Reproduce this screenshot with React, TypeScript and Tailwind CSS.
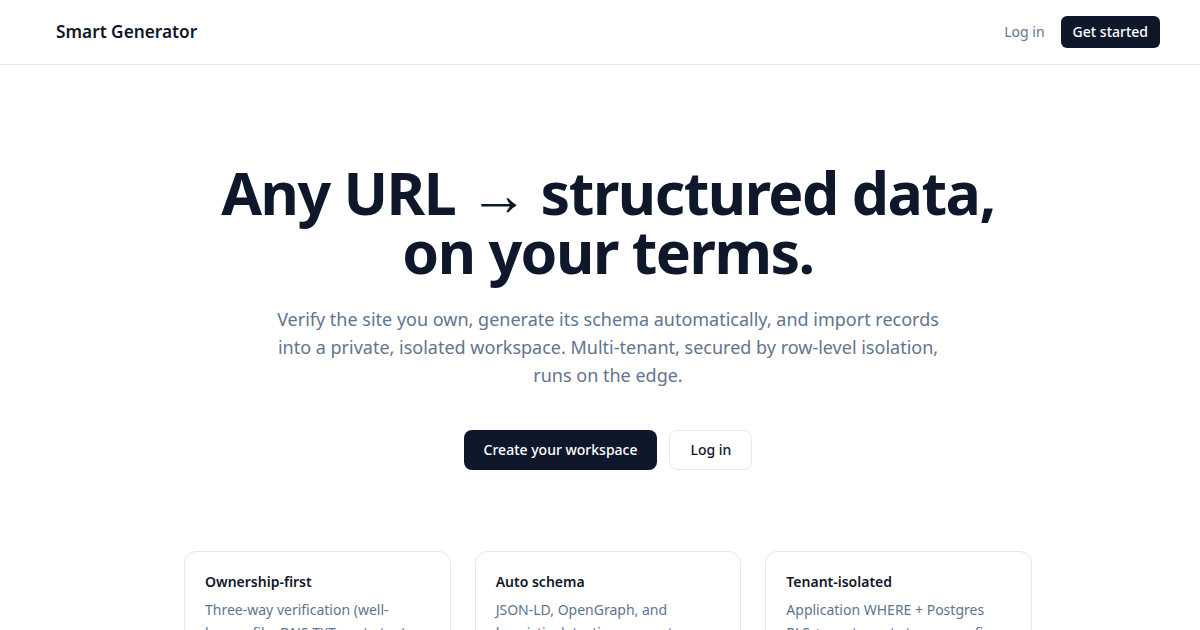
export default function App() {
  const features = [
    {
      title: "Ownership-first",
      body: "Three-way verification (well-known file, DNS TXT, meta tag) before a single page is crawled.",
    },
    {
      title: "Auto schema",
      body: "JSON-LD, OpenGraph, and heuristic detection generate your schema without manual mapping.",
    },
    {
      title: "Tenant-isolated",
      body: "Application WHERE + Postgres RLS + per-tenant storage prefix keep every workspace separate.",
    },
  ];

  return (
    <div className="w-full overflow-hidden bg-white">
      <div
        className="min-h-screen w-[1216px] bg-white text-slate-900"
        style={{ fontFamily: '"Noto Sans", sans-serif' }}
      >
        <header className="border-b border-slate-200">
          <div className="flex h-16 items-center justify-between px-14">
            <span className="text-[17.25px] font-semibold">Smart Generator</span>
            <nav className="flex items-center gap-4">
              <a className="text-sm text-slate-500">Log in</a>
              <button className="h-8 rounded-md bg-slate-900 px-3 text-sm font-medium text-white">
                Get started
              </button>
            </nav>
          </div>
        </header>

        <main className="flex flex-col items-center px-6 pt-[98px]">
          <h1 className="text-center text-[59px] font-bold leading-none tracking-tight">
            Any URL → structured data,
            <br />
            on your terms.
          </h1>
          <p className="mt-6 max-w-2xl text-center text-lg leading-7 text-slate-500">
            Verify the site you own, generate its schema automatically, and import records into a private,
            isolated workspace. Multi-tenant, secured by row-level isolation, runs on the edge.
          </p>
          <div className="mt-[41px] flex items-center gap-3">
            <button className="h-10 rounded-lg bg-slate-900 px-5 text-sm font-medium text-white">
              Create your workspace
            </button>
            <button className="h-10 rounded-lg border border-slate-200 px-5 text-sm font-medium text-slate-900">
              Log in
            </button>
          </div>

          <div className="mt-[81px] grid w-[848px] grid-cols-3 gap-6">
            {features.map((f) => (
              <div key={f.title} className="rounded-xl border border-slate-200 p-5">
                <h3 className="text-sm font-semibold">{f.title}</h3>
                <p className="mt-[7px] text-sm leading-relaxed text-slate-500">{f.body}</p>
              </div>
            ))}
          </div>
        </main>
      </div>
    </div>
  );
}
